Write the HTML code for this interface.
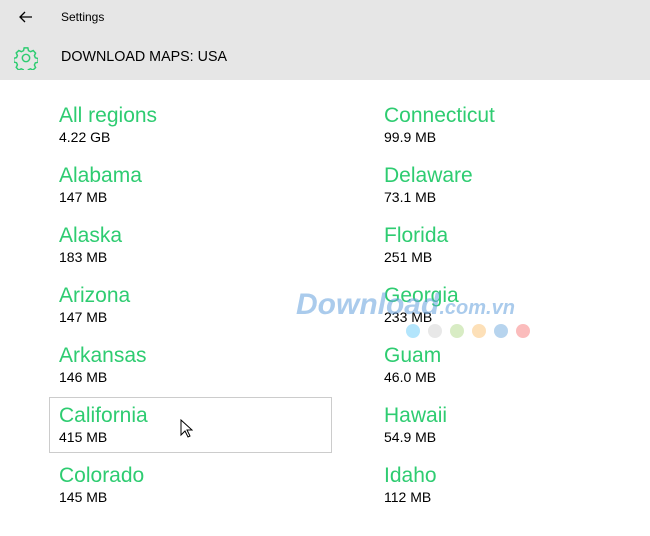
<!DOCTYPE html>
<html><head><style>
body{margin:0;width:650px;height:536px;background:#fff;font-family:"Liberation Sans",sans-serif;position:relative;overflow:hidden}
.hdr{position:absolute;left:0;top:0;width:650px;height:80px;background:#e6e6e6}
.t{position:absolute;left:61px;top:10px;font-size:12px;color:#000}
.h{position:absolute;left:61px;top:49px;font-size:14.3px;color:#000}
.it{position:absolute;width:260px}
.n{font-size:21px;color:#2ecc71;line-height:24px}
.s{font-size:14px;color:#000;line-height:19px}
.box{position:absolute;left:49px;top:397px;width:281px;height:54px;border:1px solid #ccc}
.wm{position:absolute;left:296px;top:288px;font:italic bold 30px "Liberation Sans",sans-serif;color:rgba(100,160,220,.55)}
.wm span{font-size:20px}
.dot{position:absolute;top:324px;width:14px;height:14px;border-radius:50%}
</style></head><body>
<div class="hdr"></div>
<svg style="position:absolute;left:18px;top:10px" width="16" height="14" viewBox="0 0 16 14"><path d="M14 7H2M7 2L2 7l5 5" fill="none" stroke="#000" stroke-width="1.3"/></svg>
<div class="t">Settings</div>
<svg style="position:absolute;left:14px;top:46px" width="24" height="24" viewBox="0 0 26 26"><g fill="none" stroke="#2ecc71" stroke-width="1.6"><circle cx="13" cy="13" r="4"/><path d="M11 2h4l.7 3 2.3 1.2 2.8-1.3 2.6 2.8-1.3 2.8 1 2.3 3 .8v4l-3 .7-1 2.3 1.3 2.8-2.8 2.6-2.8-1.3-2.3 1-.7 3h-4l-.7-3-2.3-1-2.8 1.3-2.6-2.8 1.3-2.8-1-2.3-3-.7v-4l3-.8 1-2.3-1.3-2.8 2.8-2.6 2.8 1.3 2.3-1.2z"/></g></svg>
<div class="h">DOWNLOAD MAPS: USA</div>
<div class="box"></div>
<div class="it" style="left:59px;top:104px"><div class="n">All regions</div><div class="s">4.22 GB</div></div>
<div class="it" style="left:59px;top:164px"><div class="n">Alabama</div><div class="s">147 MB</div></div>
<div class="it" style="left:59px;top:224px"><div class="n">Alaska</div><div class="s">183 MB</div></div>
<div class="it" style="left:59px;top:284px"><div class="n">Arizona</div><div class="s">147 MB</div></div>
<div class="it" style="left:59px;top:344px"><div class="n">Arkansas</div><div class="s">146 MB</div></div>
<div class="it" style="left:59px;top:404px"><div class="n">California</div><div class="s">415 MB</div></div>
<div class="it" style="left:59px;top:464px"><div class="n">Colorado</div><div class="s">145 MB</div></div>
<div class="it" style="left:384px;top:104px"><div class="n">Connecticut</div><div class="s">99.9 MB</div></div>
<div class="it" style="left:384px;top:164px"><div class="n">Delaware</div><div class="s">73.1 MB</div></div>
<div class="it" style="left:384px;top:224px"><div class="n">Florida</div><div class="s">251 MB</div></div>
<div class="it" style="left:384px;top:284px"><div class="n">Georgia</div><div class="s">233 MB</div></div>
<div class="it" style="left:384px;top:344px"><div class="n">Guam</div><div class="s">46.0 MB</div></div>
<div class="it" style="left:384px;top:404px"><div class="n">Hawaii</div><div class="s">54.9 MB</div></div>
<div class="it" style="left:384px;top:464px"><div class="n">Idaho</div><div class="s">112 MB</div></div>
<div class="wm">Download<span>.com.vn</span></div>
<div class="dot" style="left:406px;background:#b3e5fc"></div>
<div class="dot" style="left:428px;background:#e8e8e8"></div>
<div class="dot" style="left:450px;background:#d8ecc4"></div>
<div class="dot" style="left:472px;background:#fde0b8"></div>
<div class="dot" style="left:494px;background:#b7d4ee"></div>
<div class="dot" style="left:516px;background:#fbbcbc"></div>
<svg style="position:absolute;left:180px;top:419px" width="13" height="20" viewBox="0 0 13 20"><path d="M1 1v15l4-4 3 6 2-1-3-6h5z" fill="#fff" stroke="#000"/></svg>
</body></html>
